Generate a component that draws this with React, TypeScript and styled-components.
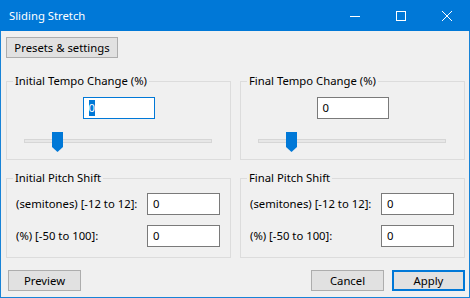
import styled, { createGlobalStyle } from 'styled-components';

const GlobalStyle = createGlobalStyle`
  html, body {
    margin: 0;
    padding: 0;
    background: #f0f0f0;
  }
  * {
    box-sizing: border-box;
  }
`;

const FONT = `"Noto Sans", "Liberation Sans", sans-serif`;

export default function App() {
  return (
    <>
      <GlobalStyle />
      <Window>
        <TitleBar>
          <Title>Sliding Stretch</Title>
          <Controls>
            <CaptionButton aria-label="minimize">
              <svg width="10" height="10" viewBox="0 0 10 10">
                <line x1="0" y1="5.5" x2="10" y2="5.5" stroke="#fff" strokeWidth="1" />
              </svg>
            </CaptionButton>
            <CaptionButton aria-label="maximize">
              <svg width="10" height="10" viewBox="0 0 10 10">
                <rect x="0.5" y="0.5" width="9" height="9" fill="none" stroke="#fff" strokeWidth="1" />
              </svg>
            </CaptionButton>
            <CaptionButton aria-label="close">
              <svg width="10" height="10" viewBox="0 0 10 10">
                <path d="M0 0 L10 10 M10 0 L0 10" stroke="#fff" strokeWidth="1" />
              </svg>
            </CaptionButton>
          </Controls>
        </TitleBar>

        <Client>
          <Button $width={112}>Presets &amp; settings</Button>

          <Groups>
            <Group>
              <Legend>Initial Tempo Change (%)</Legend>
              <TempoBody>
                <Center>
                  <TextBox $focused>
                    <Selected>0</Selected>
                  </TextBox>
                </Center>
                <Slider position={0.15} />
              </TempoBody>
            </Group>
            <Group>
              <Legend>Final Tempo Change (%)</Legend>
              <TempoBody>
                <Center>
                  <TextBox>0</TextBox>
                </Center>
                <Slider position={0.15} />
              </TempoBody>
            </Group>

            <Group>
              <Legend>Initial Pitch Shift</Legend>
              <PitchBody>
                <FieldRow>
                  <Label>(semitones) [-12 to 12]:</Label>
                  <TextBox $wide>0</TextBox>
                </FieldRow>
                <FieldRow>
                  <Label>(%) [-50 to 100]:</Label>
                  <TextBox $wide>0</TextBox>
                </FieldRow>
              </PitchBody>
            </Group>
            <Group>
              <Legend>Final Pitch Shift</Legend>
              <PitchBody>
                <FieldRow>
                  <Label>(semitones) [-12 to 12]:</Label>
                  <TextBox $wide>0</TextBox>
                </FieldRow>
                <FieldRow>
                  <Label>(%) [-50 to 100]:</Label>
                  <TextBox $wide>0</TextBox>
                </FieldRow>
              </PitchBody>
            </Group>
          </Groups>

          <Footer>
            <Button $width={73}>Preview</Button>
            <FooterRight>
              <Button $width={73}>Cancel</Button>
              <Button $width={73} $default>Apply</Button>
            </FooterRight>
          </Footer>
        </Client>
      </Window>
    </>
  );
}

function Slider({ position }: { position: number }) {
  return (
    <SliderWrap>
      <Track />
      <Thumb style={{ left: `${position * 100}%` }}>
        <svg width="11" height="20" viewBox="0 0 11 20">
          <path d="M0 0 H11 V15 L5.5 20 L0 15 Z" fill="#0078d7" />
        </svg>
      </Thumb>
    </SliderWrap>
  );
}

const Window = styled.div`
  width: 470px;
  height: 298px;
  display: flex;
  flex-direction: column;
  border: 1px solid #1883d7;
  border-top: none;
  background: #f0f0f0;
  font-family: ${FONT};
  font-size: 11.3px;
  color: #000;
`;

const TitleBar = styled.div`
  height: 31px;
  flex: none;
  display: flex;
  align-items: center;
  background: #0078d7;
  color: #fff;
  margin: 0 -1px;
  padding-left: 9px;
`;

const Title = styled.div`
  flex: 1;
  line-height: 16px;
`;

const Controls = styled.div`
  display: flex;
  height: 100%;
`;

const CaptionButton = styled.div`
  width: 46px;
  height: 100%;
  display: flex;
  align-items: center;
  justify-content: center;

  svg {
    display: block;
  }
`;

const Client = styled.div`
  flex: 1;
  display: flex;
  flex-direction: column;
  padding: 6px 4px 0 5px;
`;

const Button = styled.div<{ $width: number; $default?: boolean }>`
  width: ${p => p.$width}px;
  height: 21px;
  display: flex;
  align-items: center;
  justify-content: center;
  background: #e1e1e1;
  border: ${p => (p.$default ? '2px solid #0078d7' : '1px solid #adadad')};
  line-height: 16px;
  white-space: nowrap;
`;

const Groups = styled.div`
  display: grid;
  grid-template-columns: 225px 225px;
  column-gap: 9px;
  row-gap: 11px;
  margin-top: 16px;
`;

const Group = styled.fieldset`
  margin: 0;
  min-width: 0;
  border: 1px solid #dcdcdc;
  padding: 0;
`;

const Legend = styled.legend`
  margin-left: 6px;
  padding: 0 2px;
  line-height: 14px;
`;

const TempoBody = styled.div`
  display: flex;
  flex-direction: column;
  gap: 13px;
  padding: 9px 17px 7px 17px;
`;

const PitchBody = styled.div`
  display: flex;
  flex-direction: column;
  gap: 10px;
  padding: 8px 0 10px 9px;
`;

const Center = styled.div`
  display: flex;
  justify-content: center;
`;

const TextBox = styled.div<{ $focused?: boolean; $wide?: boolean }>`
  width: ${p => (p.$wide ? '73px' : '72px')};
  height: 22px;
  background: #fff;
  border: 1px solid ${p => (p.$focused ? '#0078d7' : '#7a7a7a')};
  padding: 0 5px;
  display: flex;
  align-items: center;
  line-height: 16px;
`;

const Selected = styled.span`
  background: #0078d7;
  color: #fff;
`;

const FieldRow = styled.div`
  display: grid;
  grid-template-columns: 131px 73px;
  align-items: center;
`;

const Label = styled.div`
  white-space: nowrap;
  line-height: 16px;
`;

const SliderWrap = styled.div`
  position: relative;
  height: 20px;
  margin-right: 1px;
`;

const Track = styled.div`
  position: absolute;
  left: 0;
  right: 0;
  top: 7px;
  height: 4px;
  background: #e7e7e7;
  border: 1px solid #d6d6d6;
`;

const Thumb = styled.div`
  position: absolute;
  top: 0;
  width: 11px;
  height: 20px;

  svg {
    display: block;
  }
`;

const Footer = styled.div`
  display: flex;
  justify-content: space-between;
  margin-top: 12px;
  padding-left: 2px;
`;

const FooterRight = styled.div`
  display: flex;
  gap: 8px;
`;
